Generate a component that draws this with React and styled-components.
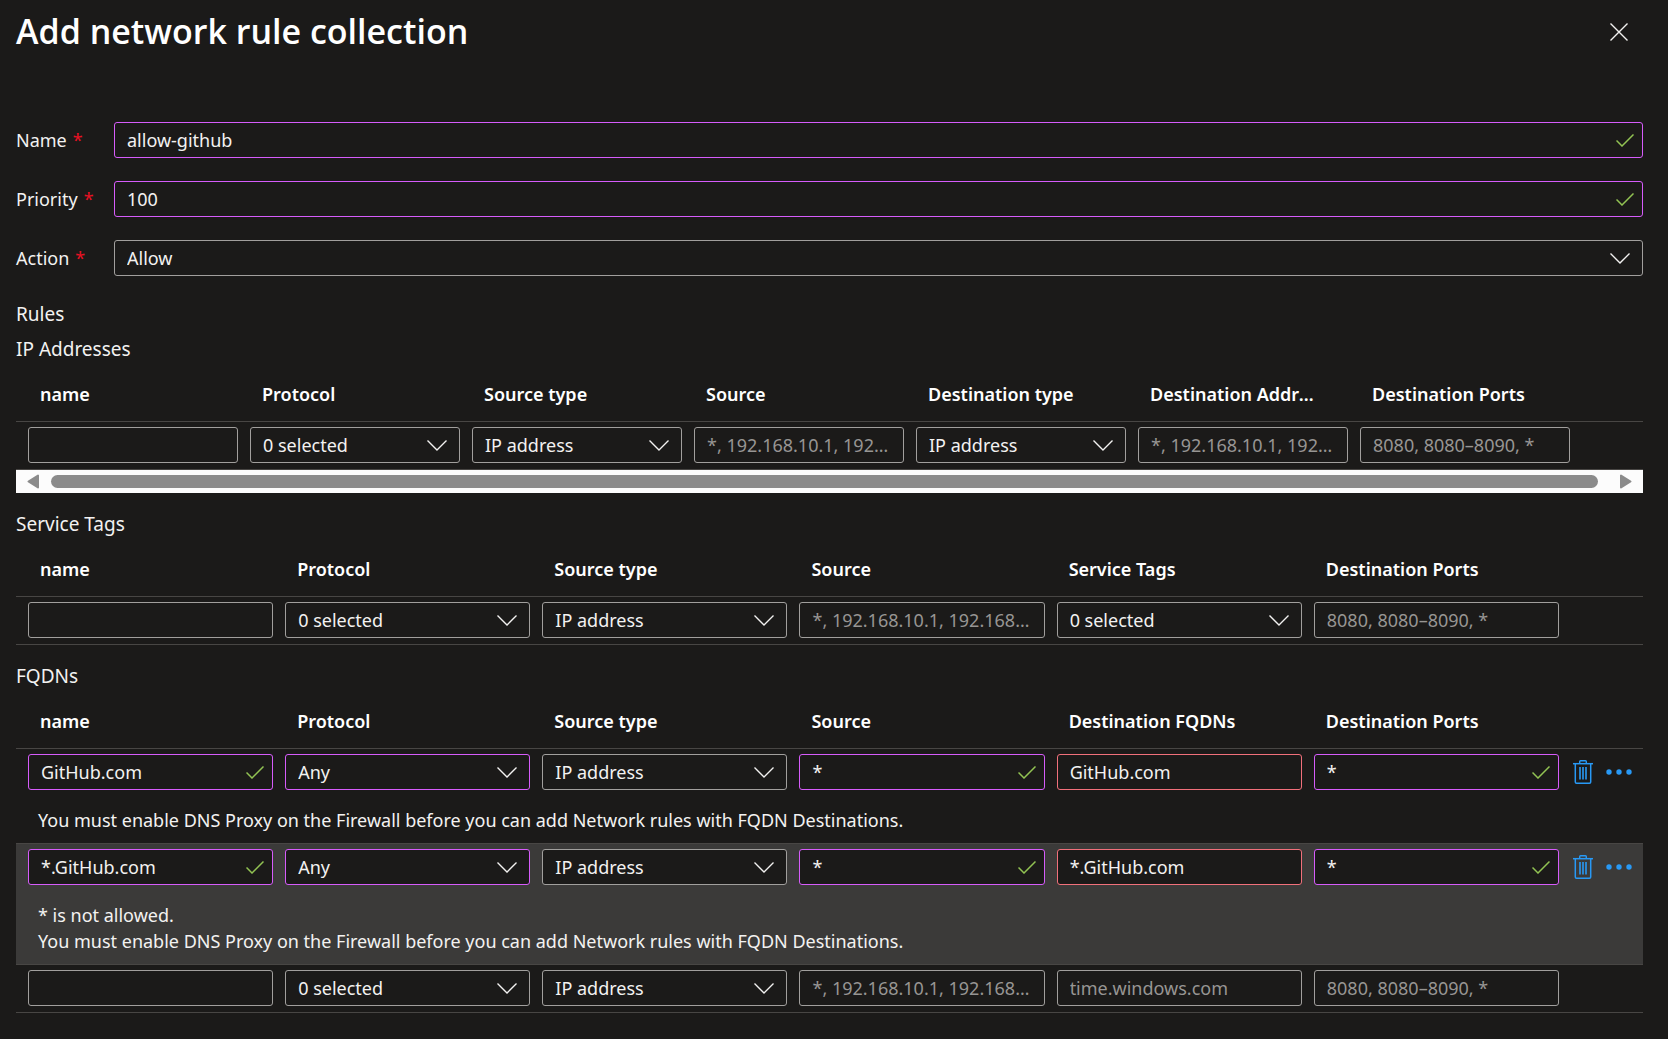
import React from "react";
import styled, { createGlobalStyle } from "styled-components";

const color = {
  bg: "#1b1a19",
  text: "#f3f2f1",
  heading: "#ffffff",
  muted: "#979593",
  border: "#a19f9d",
  line: "#484644",
  hover: "#3b3a39",
  dirty: "#d65cfa",
  error: "#f1707b",
  valid: "#92c353",
  link: "#2899f5",
  required: "#e81123",
};

const outline = { dirty: color.dirty, error: color.error };

const GlobalStyle = createGlobalStyle`
  * { box-sizing: border-box; }
  body {
    margin: 0;
    background: ${color.bg};
    color: ${color.text};
    font-family: "Segoe UI", "Noto Sans", "Open Sans", sans-serif;
    font-size: 18px;
    line-height: 26px;
  }
`;

const Panel = styled.main`
  padding: 0 25px 26px 16px;
`;

const PanelHeader = styled.header`
  display: flex;
  align-items: center;
  justify-content: space-between;
  height: 64px;
  margin-bottom: 58px;
`;

const Title = styled.h1`
  margin: 0;
  padding-bottom: 2px;
  color: ${color.heading};
  font-family: "Segoe UI", "Open Sans", sans-serif;
  font-size: 34px;
  font-weight: 600;
  line-height: 48px;
`;

const IconButton = styled.button`
  display: flex;
  align-items: center;
  justify-content: center;
  width: ${(p) => p.$width}px;
  height: 36px;
  padding: 0;
  border: 0;
  background: none;
  color: ${(p) => p.$color || color.text};
  cursor: pointer;
`;

const CloseButton = styled(IconButton)`
  margin-right: 6px;
`;

const Fields = styled.div`
  display: grid;
  gap: 23px;
`;

const FieldRow = styled.div`
  display: grid;
  grid-template-columns: 98px 1fr;
  align-items: center;
`;

const Label = styled.label`
  line-height: 36px;
`;

const Required = styled.span`
  margin-left: 6px;
  color: ${color.required};
`;

const Control = styled.div`
  display: grid;
  grid-template-columns: 1fr auto;
  align-items: center;
  height: 36px;
  border: 1px solid ${(p) => outline[p.$state] || color.border};
  border-radius: 3px;
  background: ${color.bg};

  & > * {
    grid-row: 1;
  }
  & > svg {
    grid-column: 2;
    margin-right: ${(p) => (p.$select ? 12 : 8)}px;
    pointer-events: none;
  }
`;

const TextInput = styled.input`
  grid-column: 1;
  width: 100%;
  min-width: 0;
  height: 34px;
  padding: 0 12px;
  border: 0;
  outline: 0;
  background: none;
  color: ${color.text};
  font: inherit;
  text-overflow: ellipsis;

  &::placeholder {
    color: ${color.muted};
    opacity: 1;
    text-overflow: ellipsis;
  }
`;

const Select = styled.select`
  grid-column: 1 / 3;
  width: 100%;
  min-width: 0;
  height: 34px;
  padding: 0 36px 0 12px;
  border: 0;
  outline: 0;
  appearance: none;
  background: none;
  color: ${color.text};
  font: inherit;
`;

const RulesTitle = styled.h2`
  margin: 25px 0 9px;
  font-size: 19px;
  font-weight: 400;
  line-height: 26px;
`;

const SectionTitle = styled.h3`
  margin: 0 0 6px;
  font-size: 19px;
  font-weight: 400;
  line-height: 26px;
`;

const Section = styled.section`
  & + & {
    margin-top: 18px;
  }
`;

const Table = styled.table`
  width: 100%;
  table-layout: fixed;
  border-collapse: separate;
  border-spacing: 0;
  border-bottom: 1px solid ${color.line};
`;

const ActionsCol = styled.col`
  width: ${(p) => p.$width}px;
`;

const HeadCell = styled.th`
  height: 53px;
  padding: 0 30px 2px 24px;
  overflow: hidden;
  color: ${color.heading};
  font-weight: 600;
  text-align: left;
  text-overflow: ellipsis;
  white-space: nowrap;
`;

const RuleGroup = styled.tbody`
  background: ${(p) => (p.$active ? color.hover : "transparent")};
`;

const Cell = styled.td`
  height: 48px;
  padding: 5px 0 6px 12px;
  border-top: 1px solid ${color.line};
`;

const ActionCell = styled(Cell)`
  padding-left: 0;
`;

const Actions = styled.div`
  display: flex;
  padding-left: 10px;
`;

const MessageCell = styled.td`
  padding: 11px 22px 10px;
`;

const Message = styled.p`
  margin: 0;
`;

const ScrollBar = styled.div`
  display: flex;
  align-items: center;
  height: 23px;
  padding: 0 11px;
  background: #fcfcfc;
`;

const ScrollArrow = styled.button`
  display: flex;
  padding: 0;
  border: 0;
  background: none;
  color: #8b8b8b;
`;

const ScrollTrack = styled.div`
  flex: 1;
  padding: 0 22px 0 12px;
`;

const ScrollThumb = styled.div`
  height: 13px;
  border-radius: 7px;
  background: #8b8b8b;
`;

const CloseIcon = () => (
  <svg width="18" height="18" viewBox="0 0 18 18" fill="none" stroke="currentColor" strokeWidth="1.4">
    <path d="M0.5 0.5 17.5 17.5M17.5 0.5 0.5 17.5" />
  </svg>
);

const CheckIcon = () => (
  <svg width="18" height="13" viewBox="0 0 18 13" fill="none" stroke={color.valid} strokeWidth="1.5">
    <path d="M0.5 6.5 6 12 17.5 0.5" />
  </svg>
);

const ChevronIcon = () => (
  <svg width="20" height="11" viewBox="0 0 20 11" fill="none" stroke="currentColor" strokeWidth="1.4">
    <path d="M0.5 0.5 10 10 19.5 0.5" />
  </svg>
);

const TrashIcon = () => (
  <svg width="20" height="24" viewBox="0 0 20 24" fill="none" stroke="currentColor">
    <path d="M0 3.7H20" strokeWidth="1.5" />
    <path d="M6.7 3.5V1.6Q6.7 0.8 7.5 0.8H12.5Q13.3 0.8 13.3 1.6V3.5" strokeWidth="1.4" />
    <path d="M2.3 4V22Q2.3 23.2 3.5 23.2H16.5Q17.7 23.2 17.7 22V4" strokeWidth="1.5" />
    <path d="M7 7V19.5M10 7V19.5M13 7V19.5" strokeWidth="1.6" />
  </svg>
);

const DotsIcon = () => (
  <svg width="26" height="6" viewBox="0 0 26 6" fill="currentColor">
    <circle cx="3" cy="3" r="2.7" />
    <circle cx="13" cy="3" r="2.7" />
    <circle cx="23" cy="3" r="2.7" />
  </svg>
);

const ArrowIcon = ({ d }) => (
  <svg width="12" height="15" viewBox="0 0 12 15" fill="currentColor" stroke="currentColor" strokeWidth="2" strokeLinejoin="round">
    <path d={d} />
  </svg>
);

function TextField({ state, check, ...rest }) {
  return (
    <Control $state={state}>
      <TextInput type="text" {...rest} />
      {check && <CheckIcon />}
    </Control>
  );
}

function SelectField({ state, value, ...rest }) {
  return (
    <Control $state={state} $select>
      <Select defaultValue={value} {...rest}>
        <option>{value}</option>
      </Select>
      <ChevronIcon />
    </Control>
  );
}

const text = (defaultValue, state) => ({ defaultValue, state, check: state === "dirty" });
const hint = (placeholder) => ({ placeholder });
const select = (value, state) => ({ select: true, value, state });

const ADDRESS_HINT = "*, 192.168.10.1, 192.168.10.0/24, 192.168.10.2 – 192.168.10.10";
const PORT_HINT = "8080, 8080–8090, *";
const DNS_PROXY =
  "You must enable DNS Proxy on the Firewall before you can add Network rules with FQDN Destinations.";

const sections = [
  {
    title: "IP Addresses",
    actionsWidth: 73,
    scroll: true,
    columns: ["name", "Protocol", "Source type", "Source", "Destination type", "Destination Addresses", "Destination Ports"],
    rows: [
      {
        cells: [hint(""), select("0 selected"), select("IP address"), hint(ADDRESS_HINT), select("IP address"), hint(ADDRESS_HINT), hint(PORT_HINT)],
      },
    ],
  },
  {
    title: "Service Tags",
    actionsWidth: 84,
    columns: ["name", "Protocol", "Source type", "Source", "Service Tags", "Destination Ports"],
    rows: [
      {
        cells: [hint(""), select("0 selected"), select("IP address"), hint(ADDRESS_HINT), select("0 selected"), hint(PORT_HINT)],
      },
    ],
  },
  {
    title: "FQDNs",
    actionsWidth: 84,
    columns: ["name", "Protocol", "Source type", "Source", "Destination FQDNs", "Destination Ports"],
    rows: [
      {
        saved: true,
        cells: [text("GitHub.com", "dirty"), select("Any", "dirty"), select("IP address"), text("*", "dirty"), text("GitHub.com", "error"), text("*", "dirty")],
        messages: [DNS_PROXY],
      },
      {
        saved: true,
        active: true,
        cells: [text("*.GitHub.com", "dirty"), select("Any", "dirty"), select("IP address"), text("*", "dirty"), text("*.GitHub.com", "error"), text("*", "dirty")],
        messages: ["* is not allowed.", DNS_PROXY],
      },
      {
        cells: [hint(""), select("0 selected"), select("IP address"), hint(ADDRESS_HINT), hint("time.windows.com"), hint(PORT_HINT)],
      },
    ],
  },
];

function RuleRow({ row, columns }) {
  return (
    <RuleGroup $active={row.active}>
      <tr>
        {row.cells.map(({ select: isSelect, ...cell }, i) => (
          <Cell key={columns[i]}>
            {isSelect ? (
              <SelectField aria-label={columns[i]} {...cell} />
            ) : (
              <TextField aria-label={columns[i]} {...cell} />
            )}
          </Cell>
        ))}
        <ActionCell>
          {row.saved && (
            <Actions>
              <IconButton type="button" aria-label="Delete rule" $width={28} $color={color.link}>
                <TrashIcon />
              </IconButton>
              <IconButton type="button" aria-label="More actions" $width={44} $color={color.link}>
                <DotsIcon />
              </IconButton>
            </Actions>
          )}
        </ActionCell>
      </tr>
      {row.messages && (
        <tr>
          <MessageCell colSpan={columns.length + 1}>
            {row.messages.map((m) => (
              <Message key={m}>{m}</Message>
            ))}
          </MessageCell>
        </tr>
      )}
    </RuleGroup>
  );
}

function RuleSection({ title, columns, rows, actionsWidth, scroll }) {
  return (
    <Section>
      <SectionTitle>{title}</SectionTitle>
      <Table aria-label={title}>
        <colgroup>
          {columns.map((c) => (
            <col key={c} />
          ))}
          <ActionsCol $width={actionsWidth} />
        </colgroup>
        <thead>
          <tr>
            {columns.map((c) => (
              <HeadCell key={c} scope="col">
                {c}
              </HeadCell>
            ))}
            <td />
          </tr>
        </thead>
        {rows.map((row, i) => (
          <RuleRow key={i} row={row} columns={columns} />
        ))}
      </Table>
      {scroll && (
        <ScrollBar>
          <ScrollArrow type="button" aria-label="Scroll left">
            <ArrowIcon d="M11 1.5V13.5L1.5 7.5Z" />
          </ScrollArrow>
          <ScrollTrack>
            <ScrollThumb />
          </ScrollTrack>
          <ScrollArrow type="button" aria-label="Scroll right">
            <ArrowIcon d="M1 1.5V13.5L10.5 7.5Z" />
          </ScrollArrow>
        </ScrollBar>
      )}
    </Section>
  );
}

function FormField({ id, label, children }) {
  return (
    <FieldRow>
      <Label htmlFor={id}>
        {label}
        <Required>*</Required>
      </Label>
      {children}
    </FieldRow>
  );
}

export default function App() {
  return (
    <>
      <GlobalStyle />
      <Panel>
        <PanelHeader>
          <Title>Add network rule collection</Title>
          <CloseButton type="button" aria-label="Close" $width={36}>
            <CloseIcon />
          </CloseButton>
        </PanelHeader>
        <Fields>
          <FormField id="name" label="Name">
            <TextField id="name" defaultValue="allow-github" state="dirty" check />
          </FormField>
          <FormField id="priority" label="Priority">
            <TextField id="priority" defaultValue="100" state="dirty" check />
          </FormField>
          <FormField id="action" label="Action">
            <SelectField id="action" value="Allow" />
          </FormField>
        </Fields>
        <RulesTitle>Rules</RulesTitle>
        {sections.map((s) => (
          <RuleSection key={s.title} {...s} />
        ))}
      </Panel>
    </>
  );
}
